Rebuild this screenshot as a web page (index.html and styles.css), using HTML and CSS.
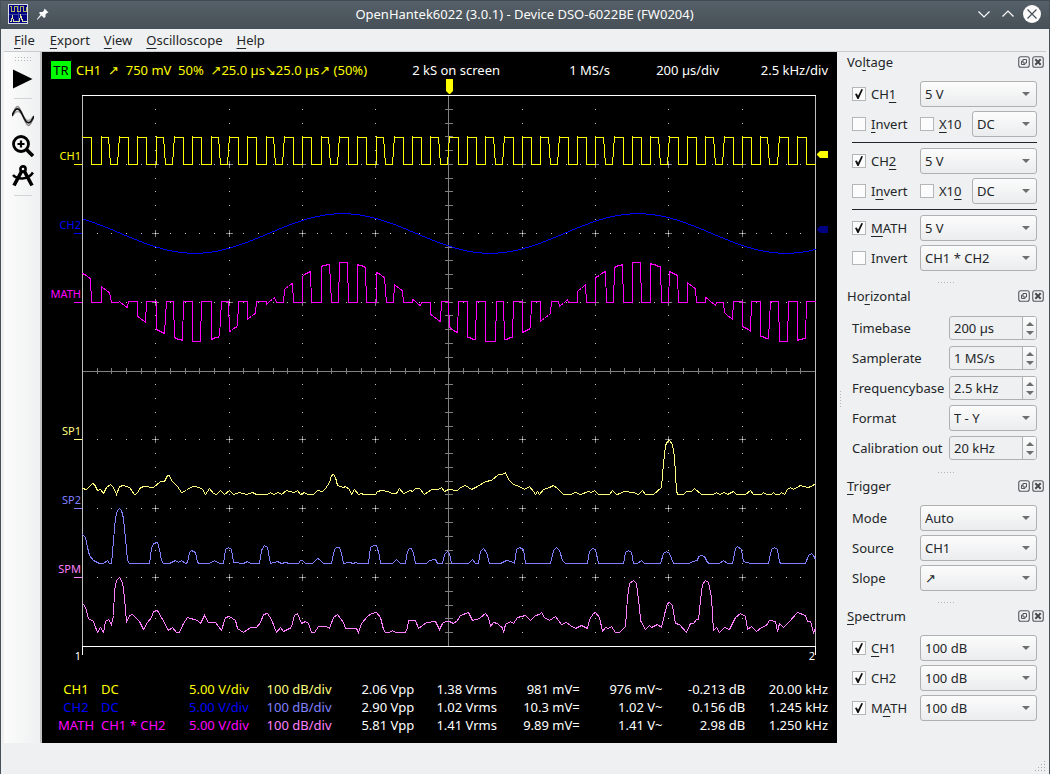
FILE: index.html
```html
<!DOCTYPE html>
<html lang="en">
<head>
<meta charset="utf-8">
<title>OpenHantek6022 (3.0.1) - Device DSO-6022BE (FW0204)</title>
<link rel="stylesheet" href="styles.css">
</head>
<body>
<div class="window">
  <header class="titlebar">
    <div class="title-side">
      <svg class="app-icon" width="20" height="20" viewBox="0 0 20 20" shape-rendering="crispEdges">
        <rect x=".5" y=".5" width="19" height="19" fill="#000080" stroke="#d8dce8"/>
        <path d="M10.500 1v18M1 10.500h18" stroke="#3040a0" fill="none"/>
        <path d="M1.500 2.500h2v5h3v-5h3v5h3v-5h3v5h3v-5" stroke="#b0b060" fill="none"/>
        <path d="M1.500 17.500h2l1-6 1 6h6l1-6 1 2 1 4h4" stroke="#e0e0a0" fill="none"/>
      </svg>
      <button class="title-btn" aria-label="Keep above">
        <svg width="14" height="14" viewBox="0 0 14 14"><path d="M8.500 1.500 12.500 5.500 11 6 9.500 7.500 9.500 10 8 11 5.500 8.500 1 13 1 12 4.500 7.500 3 6 4 5 6.500 5 8 3.500z" fill="#fcfcfc"/></svg>
      </button>
    </div>
    <h1>OpenHantek6022 (3.0.1) - Device DSO-6022BE (FW0204)</h1>
    <div class="title-side title-end">
      <button class="title-btn" aria-label="Minimize"><svg width="12" height="12" viewBox="0 0 12 12"><path d="M.5 3.500 6 9l5.500-5.500" fill="none" stroke="#fcfcfc" stroke-width="1.200"/></svg></button>
      <button class="title-btn" aria-label="Maximize"><svg width="12" height="12" viewBox="0 0 12 12"><path d="M.5 8.500 6 3l5.500 5.500" fill="none" stroke="#fcfcfc" stroke-width="1.200"/></svg></button>
      <button class="title-btn" aria-label="Close"><svg width="18" height="18" viewBox="0 0 18 18"><circle cx="9" cy="9" r="9" fill="#fcfcfc"/><path d="M4.500 4.500l9 9M13.500 4.500l-9 9" stroke="#475057" stroke-width="1.200"/></svg></button>
    </div>
  </header>

  <nav class="menubar">
    <button><u>F</u>ile</button>
    <button><u>E</u>xport</button>
    <button><u>V</u>iew</button>
    <button><u>O</u>scilloscope</button>
    <button><u>H</u>elp</button>
  </nav>

  <main class="workspace">
    <aside class="toolbar">
      <span class="tool-grip"></span>
      <button class="tool tool-play" aria-label="Start"><svg width="22" height="22" viewBox="0 0 22 22"><path d="M1 1.500 20.500 11 1 20.500z" fill="#000"/></svg></button>
      <span class="tool-sep"></span>
      <button class="tool" aria-label="Digital phosphor"><svg width="22" height="22" viewBox="0 0 22 22" fill="none">
        <path d="M0 11C5-3 7 0 11 11S17 25 22 11" stroke="#888" stroke-width="1.500"/>
        <path d="M0 11C5 5 7 5 11 11S17 17 22 11" stroke="#aaa" stroke-width="1.500"/>
        <path d="M0 11C4 1 7 2 11 11S18 20 22 11" stroke="#111" stroke-width="1.800"/></svg></button>
      <button class="tool" aria-label="Zoom"><svg width="22" height="22" viewBox="0 0 22 22" fill="none" stroke="#000"><circle cx="9" cy="9" r="7.500" stroke-width="2.800"/><path d="M9 5.500v7M5.500 9h7" stroke-width="2.200"/><path d="M14.500 14.500 21 21" stroke-width="3.600"/></svg></button>
      <button class="tool" aria-label="Measure"><svg width="22" height="22" viewBox="0 0 22 22" fill="none" stroke="#000"><circle cx="11" cy="4" r="2.600" stroke-width="2.600"/><path d="M9.500 6.500 2 20.500M12.500 6.500 20 20.500" stroke-width="3.600"/><path d="M1 10C5 14.500 16 15.500 21 7.500" stroke-width="2.600"/></svg></button>
      <span class="tool-sep"></span>
    </aside>

    <section class="scope">
      <div class="scope-head">
        <div class="trigger-info"><span class="tr-badge">TR</span><span class="trigger-text">CH1  ↗  750 mV  50%  ↗25.0 µs↘25.0 µs↗ (50%)</span></div>
        <span>2 kS on screen</span>
        <span>1 MS/s</span>
        <span>200 µs/div</span>
        <span>2.5 kHz/div</span>
      </div>
      <svg class="plot" id="plot" viewBox="42 79 795 584" role="img" aria-label="Oscilloscope traces"></svg>
      <table class="measures">
        <tbody>
          <tr class="m-ch1"><th>CH1</th><td class="left">DC</td><td>5.00 V/div</td><td class="spec">100 dB/div</td><td>2.06 Vpp</td><td>1.38 Vrms</td><td>981 mV=</td><td>976 mV~</td><td>-0.213 dB</td><td>20.00 kHz</td></tr>
          <tr class="m-ch2"><th>CH2</th><td class="left">DC</td><td>5.00 V/div</td><td class="spec">100 dB/div</td><td>2.90 Vpp</td><td>1.02 Vrms</td><td>10.3 mV=</td><td>1.02 V~</td><td>0.156 dB</td><td>1.245 kHz</td></tr>
          <tr class="m-math"><th>MATH</th><td class="left">CH1 * CH2</td><td>5.00 V/div</td><td class="spec">100 dB/div</td><td>5.81 Vpp</td><td>1.41 Vrms</td><td>9.89 mV=</td><td>1.41 V~</td><td>2.98 dB</td><td>1.250 kHz</td></tr>
        </tbody>
      </table>
    </section>

    <aside class="docks">
      <span class="dock-splitter"></span>
      <svg class="symbols" width="0" height="0">
        <symbol id="float" viewBox="0 0 12 12"><rect x=".75" y=".75" width="10.500" height="10.500" rx="2" fill="none" stroke="#55595c" stroke-width="1.100"/><path d="M5 3.500h3.500V7H5zM5 5H3.500v3.500H7V7" fill="none" stroke="#55595c"/></symbol>
        <symbol id="close" viewBox="0 0 12 12"><rect x=".75" y=".75" width="10.500" height="10.500" rx="2" fill="none" stroke="#55595c" stroke-width="1.100"/><path d="M3.300 3.300l5.400 5.400M8.700 3.300 3.300 8.700" stroke="#45494c" stroke-width="2"/></symbol>
      </svg>

      <section class="dock">
        <header><h2>Vo<u>l</u>tage</h2><button aria-label="Float"><svg width="12" height="12"><use href="#float"/></svg></button><button aria-label="Close"><svg width="12" height="12"><use href="#close"/></svg></button></header>
        <div class="rows">
          <div class="row"><label class="check"><input type="checkbox" checked><span>CH<u>1</u></span></label><span class="combo"><select aria-label="CH1 gain"><option>5 V</option></select></span></div>
          <div class="row"><label class="check"><input type="checkbox"><span><u>I</u>nvert</span></label><label class="check x10"><input type="checkbox"><span><u>X</u>10</span></label><span class="combo"><select aria-label="CH1 coupling"><option>DC</option></select></span></div>
          <hr>
          <div class="row"><label class="check"><input type="checkbox" checked><span>CH<u>2</u></span></label><span class="combo"><select aria-label="CH2 gain"><option>5 V</option></select></span></div>
          <div class="row"><label class="check"><input type="checkbox"><span>I<u>n</u>vert</span></label><label class="check x10"><input type="checkbox"><span>X1<u>0</u></span></label><span class="combo"><select aria-label="CH2 coupling"><option>DC</option></select></span></div>
          <hr>
          <div class="row"><label class="check"><input type="checkbox" checked><span><u>M</u>ATH</span></label><span class="combo"><select aria-label="MATH gain"><option>5 V</option></select></span></div>
          <div class="row"><label class="check"><input type="checkbox"><span>Invert</span></label><span class="combo"><select aria-label="MATH mode"><option>CH1 * CH2</option></select></span></div>
        </div>
      </section>
      <span class="dock-grip"></span>

      <section class="dock wide-labels">
        <header><h2>Ho<u>r</u>izontal</h2><button aria-label="Float"><svg width="12" height="12"><use href="#float"/></svg></button><button aria-label="Close"><svg width="12" height="12"><use href="#close"/></svg></button></header>
        <div class="rows">
          <div class="row"><label for="timebase">Timebase</label><span class="spin"><input id="timebase" type="text" value="200 µs"><span class="steps"><button aria-label="Up"></button><button aria-label="Down"></button></span></span></div>
          <div class="row"><label for="samplerate">Samplerate</label><span class="spin"><input id="samplerate" type="text" value="1 MS/s"><span class="steps"><button aria-label="Up"></button><button aria-label="Down"></button></span></span></div>
          <div class="row"><label for="freqbase">Frequencybase</label><span class="spin"><input id="freqbase" type="text" value="2.5 kHz"><span class="steps"><button aria-label="Up"></button><button aria-label="Down"></button></span></span></div>
          <div class="row"><label for="format">Format</label><span class="combo"><select id="format"><option>T - Y</option></select></span></div>
          <div class="row"><label for="calout">Calibration out</label><span class="spin"><input id="calout" type="text" value="20 kHz"><span class="steps"><button aria-label="Up"></button><button aria-label="Down"></button></span></span></div>
        </div>
      </section>
      <span class="dock-grip"></span>

      <section class="dock">
        <header><h2><u>T</u>rigger</h2><button aria-label="Float"><svg width="12" height="12"><use href="#float"/></svg></button><button aria-label="Close"><svg width="12" height="12"><use href="#close"/></svg></button></header>
        <div class="rows">
          <div class="row"><label for="mode">Mode</label><span class="combo"><select id="mode"><option>Auto</option></select></span></div>
          <div class="row"><label for="source">Source</label><span class="combo"><select id="source"><option>CH1</option></select></span></div>
          <div class="row"><label for="slope">Slope</label><span class="combo"><select id="slope"><option>↗</option></select></span></div>
        </div>
      </section>
      <span class="dock-grip"></span>

      <section class="dock">
        <header><h2><u>S</u>pectrum</h2><button aria-label="Float"><svg width="12" height="12"><use href="#float"/></svg></button><button aria-label="Close"><svg width="12" height="12"><use href="#close"/></svg></button></header>
        <div class="rows">
          <div class="row"><label class="check"><input type="checkbox" checked><span><u>C</u>H1</span></label><span class="combo"><select aria-label="CH1 magnitude"><option>100 dB</option></select></span></div>
          <div class="row"><label class="check"><input type="checkbox" checked><span>CH2</span></label><span class="combo"><select aria-label="CH2 magnitude"><option>100 dB</option></select></span></div>
          <div class="row"><label class="check"><input type="checkbox" checked><span>M<u>A</u>TH</span></label><span class="combo"><select aria-label="MATH magnitude"><option>100 dB</option></select></span></div>
        </div>
      </section>
    </aside>
  </main>

  <footer class="statusbar">
    <svg width="12" height="12" viewBox="0 0 12 12" shape-rendering="crispEdges"><path d="M10 1h1M7 4h1M10 4h1M4 7h1M7 7h1M10 7h1M1 10h1M4 10h1M7 10h1M10 10h1" stroke="#a8aaac" stroke-width="1" transform="translate(0 .5)"/></svg>
  </footer>
</div>
<script src="scope.js"></script>
</body>
</html>
```

FILE: styles.css
```css
* {
  box-sizing: border-box;
}

body {
  margin: 0;
  background: #eff0f1;
  color: #232629;
  font: 13px/18px "Noto Sans", "DejaVu Sans", sans-serif;
}

button,
input,
select {
  font: inherit;
  color: inherit;
}

button {
  padding: 0;
  border: 0;
  background: none;
}

button svg {
  display: block;
}

h1,
h2 {
  margin: 0;
  font-size: inherit;
  font-weight: 400;
}

u {
  text-decoration: underline 1px;
  text-underline-offset: 3px;
  text-decoration-skip-ink: none;
}

.window {
  display: flex;
  flex-direction: column;
  min-height: 100vh;
  border: solid #475057;
  border-width: 0 1px;
}

/* Title bar */
.titlebar {
  display: grid;
  grid-template-columns: 1fr auto 1fr;
  align-items: center;
  height: 29px;
  padding: 0 8px 1px 7px;
  background: linear-gradient(#434b52 0 1px, #566068 1px, #475057);
  color: #fcfcfc;
}

.title-side {
  display: flex;
  align-items: center;
  gap: 8px;
}

.title-end {
  justify-content: flex-end;
  gap: 12px;
}

.title-end .title-btn:last-child {
  margin-left: -3px;
}

/* Menu bar */
.menubar {
  display: flex;
  height: 23px;
  margin: 0 3px;
  padding: 0 2px;
  border-bottom: 1px solid #c9cbcd;
}

.menubar button {
  padding: 0 7px;
}

.menubar button:first-child {
  padding: 0 8px;
}

.workspace {
  display: flex;
  flex: 1;
}

/* Tool bar */
.toolbar {
  display: flex;
  flex-direction: column;
  align-items: center;
  width: 38px;
  margin-left: 3px;
  padding: 5px 0 0 2px;
  background: linear-gradient(90deg, #fcfcfc, #eff0f1);
  border-right: 2px solid #c0c2c4;
}

.tool-grip {
  width: 17px;
  height: 4px;
  background: repeating-linear-gradient(90deg, #b4b6b8 0 1px, transparent 1px 3px) 0 0 / 17px 1px no-repeat,
    repeating-linear-gradient(90deg, #b4b6b8 0 1px, transparent 1px 3px) 0 3px / 17px 1px no-repeat;
}

.tool {
  display: grid;
  place-items: center;
  width: 30px;
  height: 30px;
}

.tool-play {
  margin-top: 3px;
}

.tool-sep {
  width: 18px;
  height: 1px;
  margin: 4px 0 2px;
  background: #d2d4d6;
}

/* Oscilloscope screen */
.scope {
  flex: 1;
  min-width: 0;
  background: #000;
  color: #fff;
}

.scope-head {
  display: grid;
  grid-template-columns: 1fr 133px 110px 109px 109px;
  height: 27px;
  padding: 9px 9px 0;
  text-align: right;
  white-space: nowrap;
}

.trigger-info {
  display: flex;
  gap: 5px;
  width: 0;
  color: #ff0;
}

.tr-badge {
  width: 20px;
  flex-shrink: 0;
  background: #0f0;
  color: #000;
  text-align: center;
}

.trigger-text {
  white-space: pre;
}

.plot {
  display: block;
  width: 100%;
  height: auto;
}

.plot text {
  font-size: 11px;
  text-anchor: end;
}

.measures {
  width: calc(100% - 18px);
  margin: 17px 9px 9px;
  border-collapse: collapse;
  table-layout: fixed;
}

.measures th,
.measures td {
  padding: 0;
  font-weight: 400;
  text-align: right;
  white-space: nowrap;
}

.measures th {
  width: 50px;
  text-align: center;
}

.measures .left {
  width: 65px;
  text-align: left;
}

.m-ch1 :nth-child(-n + 3) { color: #ff0; }
.m-ch1 .spec { color: #ffff80; }
.m-ch2 :nth-child(-n + 3) { color: #00f; }
.m-ch2 .spec { color: #8080ff; }
.m-math :nth-child(-n + 3) { color: #f0f; }
.m-math .spec { color: #ff80ff; }

/* Dock panels */
.docks {
  position: relative;
  flex: 0 0 212px;
}

.symbols {
  position: absolute;
}

.dock-splitter {
  position: absolute;
  top: 339px;
  left: 3px;
  width: 1px;
  height: 16px;
  background: repeating-linear-gradient(#b4b6b8 0 1px, transparent 1px 3px);
}

.dock header {
  display: flex;
  align-items: center;
  gap: 2px;
  height: 20px;
  padding: 0 5px 0 10px;
}

.dock h2 {
  flex: 1;
}

.rows {
  display: flex;
  flex-direction: column;
  gap: 4px;
  padding: 9px 12px 0 15px;
}

.row {
  display: flex;
  align-items: center;
  height: 26px;
}

.row label {
  flex: 0 0 68px;
  white-space: nowrap;
}

.wide-labels .row label {
  flex-basis: 97px;
}

.row .x10 {
  flex-basis: 52px;
}

.rows hr {
  width: 100%;
  height: 3px;
  margin: 0;
  border: 0;
  background: linear-gradient(#232629, #232629) 0 1px / 100% 1px no-repeat;
}

.check {
  display: flex;
  align-items: center;
}

.check input {
  appearance: none;
  display: grid;
  place-items: center;
  width: 14px;
  height: 14px;
  margin: 0 5px 0 0;
  border: 1px solid #b4b6b8;
  background: #fcfcfc;
}

.check input:checked::before {
  content: "";
  width: 8px;
  height: 10px;
  background: #111;
  clip-path: polygon(0 50%, 22% 44%, 38% 68%, 80% 0, 100% 6%, 45% 100%, 30% 100%);
}

.combo {
  position: relative;
  flex: 1;
  display: flex;
}

.combo select {
  appearance: none;
  width: 100%;
  height: 26px;
  padding: 0 20px 0 4px;
  border: 1px solid #aeb0b2;
  border-radius: 3px;
  background: linear-gradient(#fcfcfc, #ebecee);
}

.combo::after {
  content: "";
  position: absolute;
  top: 11px;
  right: 7px;
  border: 4px solid transparent;
  border-top-color: #6c6e70;
  border-bottom: 0;
  pointer-events: none;
}

.spin {
  flex: 1;
  display: flex;
  min-width: 0;
  height: 24px;
  border: 1px solid #aeb0b2;
  border-radius: 3px;
}

.spin input {
  flex: 1;
  width: 0;
  min-width: 0;
  padding: 0 4px;
  border: 0;
  background: none;
}

.steps {
  display: flex;
  flex-direction: column;
  flex: 0 0 14px;
  padding: 2px 0;
  border-left: 1px solid #aeb0b2;
  border-radius: 0 2px 2px 0;
  background: linear-gradient(#fcfcfc, #ebecee);
}

.steps button {
  flex: 1;
  display: grid;
  place-items: center;
}

.steps button::before {
  content: "";
  border: 4px solid transparent;
  border-top: 0;
  border-bottom-color: #6c6e70;
}

.steps button:last-child::before {
  border: 4px solid transparent;
  border-bottom: 0;
  border-top-color: #6c6e70;
}

.dock-grip {
  display: block;
  height: 15px;
  padding-left: 6px;
  background: repeating-linear-gradient(90deg, #b4b6b8 0 1px, transparent 1px 3px) 50% 11px / 16px 1px no-repeat content-box;
  background-origin: content-box;
}

/* Status bar */
.statusbar {
  display: flex;
  align-items: flex-end;
  justify-content: flex-end;
  height: 31px;
  padding: 2px 3px;
}
```

FILE: scope.js
```js
const NS = "http://www.w3.org/2000/svg";
const plot = document.getElementById("plot");
const LEFT = 82, RIGHT = 815, TOP = 95, BOTTOM = 646;
const DIV_X = (RIGHT - LEFT) / 10, DIV_Y = (BOTTOM - TOP) / 8;
const CX = 448, CY = 371;

function add(name, attrs, text) {
  const el = document.createElementNS(NS, name);
  for (const key in attrs) el.setAttribute(key, attrs[key]);
  if (text) el.textContent = text;
  plot.appendChild(el);
}

function block(x, y, w, h, color) {
  add("rect", { x, y, width: w, height: h, fill: color, "shape-rendering": "crispEdges" });
}

function trace(points, color) {
  add("polyline", {
    points: points.map(([x, y]) => `${x + 0.5},${y + 0.5}`).join(" "),
    fill: "none", stroke: color, "shape-rendering": "crispEdges"
  });
}

// Graticule
for (let i = 1; i < 10; i++) {
  if (i === 5) continue;
  const x = Math.round(LEFT + i * DIV_X);
  for (let s = 1; s < 40; s++) {
    const y = Math.round(TOP + s * DIV_Y / 5);
    if (s % 5) block(x, y, 1, 1, "#c0c0c0");
    else if (s !== 20) {
      block(x - 3, y, 7, 1, "#808080");
      block(x, y - 3, 1, 7, "#808080");
      block(x, y, 1, 1, "#fff");
    }
  }
}
for (let j = 1; j < 8; j++) {
  if (j === 4) continue;
  const y = Math.round(TOP + j * DIV_Y);
  for (let s = 1; s < 50; s++) {
    if (s % 5) block(Math.round(LEFT + s * DIV_X / 5), y, 1, 1, "#c0c0c0");
  }
}
block(LEFT, CY, RIGHT - LEFT, 1, "#808080");
block(CX, TOP, 1, BOTTOM - TOP, "#808080");
for (let s = 1; s < 50; s++) block(Math.round(LEFT + s * DIV_X / 5), CY - 3, 1, 6, "#808080");
for (let s = 1; s < 40; s++) block(CX - 3, Math.round(TOP + s * DIV_Y / 5), 8, 1, "#808080");
block(LEFT, TOP, 1, BOTTOM - TOP, "#c0c0c0");
block(RIGHT, TOP, 1, BOTTOM - TOP, "#c0c0c0");
block(LEFT, TOP, RIGHT - LEFT + 1, 1, "#fff");
block(LEFT, BOTTOM, RIGHT - LEFT + 1, 1, "#fff");
block(LEFT, BOTTOM, 1, 9, "#fff");
block(RIGHT, BOTTOM, 1, 9, "#fff");

// CH1 square wave, CH2 sine and their product
const PERIOD = (RIGHT - LEFT) / 40;
const sine = x => Math.cos(2 * Math.PI * (x - 342) / 295.5);
const ch1 = [], ch2 = [], math = [];
for (let k = 0; k < 40; k++) {
  const rise = Math.round(LEFT + 0.3 + k * PERIOD);
  const fall = Math.round(LEFT + 0.3 + (k + 0.5) * PERIOD);
  const next = Math.round(LEFT + 0.3 + (k + 1) * PERIOD);
  const slant = k % 3 === 1 ? 2 : 0;
  ch1.push([rise, 136], [rise + 1, 137], [fall - slant, 137], [fall, 164], [next - slant, 164]);
  for (let x = rise; x <= fall; x += 2) {
    const value = sine(x);
    math.push([x, Math.round(302 - (value < 0 ? 39 : 40) * value)]);
  }
  const rest = sine(fall) < -0.15 ? 301 : 302;
  math.push([fall + (slant ? 1 : 0), rest], [next - (slant ? 1 : 0), rest]);
}
for (let x = LEFT; x <= RIGHT; x++) ch2.push([x, Math.round(233 - 19.8 * sine(x))]);

const sp1 = [[82,488],[86,489],[92,483],[94,484],[97,490],[100,489],[103,493],[106,487],[110,484],[113,487],[116,494],[119,486],[123,485],[129,487],[134,494],[137,493],[139,488],[143,486],[153,487],[160,481],[164,481],[167,475],[169,475],[171,480],[177,486],[181,492],[186,490],[188,488],[193,486],[199,487],[202,489],[205,494],[209,488],[213,493],[216,494],[220,490],[224,494],[229,490],[233,494],[239,492],[246,494],[252,492],[256,494],[267,494],[270,492],[273,494],[278,492],[281,494],[286,490],[289,491],[294,492],[297,490],[300,494],[304,492],[307,494],[313,494],[317,490],[322,491],[325,488],[329,482],[331,475],[333,474],[335,477],[337,485],[343,487],[345,486],[349,489],[351,494],[354,489],[358,494],[361,493],[363,494],[375,494],[377,491],[381,490],[387,491],[392,493],[396,493],[399,488],[403,493],[410,490],[412,491],[415,488],[419,488],[424,494],[431,489],[438,489],[441,487],[444,491],[448,489],[457,490],[460,487],[465,485],[471,489],[477,486],[485,481],[491,480],[498,474],[502,474],[505,472],[508,479],[513,484],[519,486],[524,489],[529,486],[533,491],[535,494],[537,491],[539,494],[543,489],[549,487],[553,485],[557,488],[563,494],[570,494],[575,492],[580,494],[588,491],[591,492],[594,490],[598,494],[609,494],[612,490],[616,494],[620,493],[623,491],[633,492],[638,494],[642,490],[645,494],[653,494],[661,487],[663,463],[665,445],[667,441],[669,440],[672,444],[674,457],[676,490],[677,494],[683,494],[686,491],[691,491],[694,488],[701,494],[713,494],[716,492],[719,494],[724,492],[727,494],[733,491],[736,494],[745,494],[750,490],[753,494],[761,494],[763,492],[766,494],[771,494],[773,492],[775,494],[779,494],[781,492],[784,494],[787,489],[790,487],[793,489],[800,485],[807,487],[811,486],[815,483]];

const sp2 = [[82,534],[85,537],[87,547],[89,555],[93,560],[99,563],[103,563],[107,560],[109,563],[111,563],[113,540],[115,517],[117,510],[119,508],[121,510],[123,518],[125,538],[127,560],[129,563],[149,563],[151,548],[153,543],[157,542],[159,549],[161,560],[163,563],[169,563],[175,560],[178,562],[181,560],[185,563],[187,562],[189,552],[191,550],[195,552],[197,562],[199,563],[209,563],[214,560],[219,563],[223,563],[225,549],[228,547],[231,549],[233,562],[243,563],[247,561],[250,563],[259,563],[261,550],[264,545],[267,547],[270,563],[277,561],[281,563],[285,562],[289,563],[298,563],[300,560],[302,560],[305,563],[312,563],[317,558],[319,559],[323,563],[331,563],[334,549],[336,547],[339,547],[341,553],[343,563],[349,562],[353,563],[355,562],[358,563],[368,563],[370,547],[373,545],[376,545],[379,555],[380,563],[392,563],[396,559],[400,563],[405,563],[407,551],[409,548],[411,548],[413,553],[415,563],[426,563],[429,560],[435,559],[437,563],[442,563],[444,554],[447,551],[449,553],[451,563],[468,563],[472,559],[475,563],[478,563],[480,551],[483,548],[486,552],[489,563],[500,563],[506,560],[511,561],[514,563],[516,549],[519,547],[523,549],[525,563],[550,563],[553,550],[556,547],[559,550],[562,560],[565,563],[587,563],[589,551],[592,548],[595,549],[598,563],[623,563],[625,552],[628,550],[631,552],[633,563],[637,563],[641,560],[644,563],[660,563],[663,553],[666,551],[669,553],[673,563],[689,563],[692,561],[697,560],[698,556],[701,555],[704,556],[707,562],[709,563],[719,563],[723,560],[727,563],[732,563],[735,548],[737,546],[741,549],[743,561],[750,563],[768,563],[771,549],[774,547],[777,549],[779,562],[781,563],[805,563],[808,555],[811,553],[813,555],[815,559]];

const spm = [[83,604],[85,607],[88,618],[93,621],[97,632],[100,627],[103,632],[105,621],[108,619],[111,624],[113,615],[114,590],[116,580],[119,577],[122,582],[124,597],[126,622],[129,615],[132,614],[139,621],[143,629],[147,622],[151,617],[153,611],[157,610],[161,617],[168,630],[172,627],[176,632],[179,632],[183,623],[187,617],[197,620],[200,623],[204,615],[208,622],[215,622],[221,630],[225,617],[229,616],[235,620],[237,628],[243,632],[250,627],[256,627],[260,622],[263,614],[267,613],[271,619],[276,632],[280,627],[283,631],[291,627],[294,615],[297,613],[301,623],[305,621],[308,623],[311,632],[314,632],[318,626],[326,626],[329,628],[333,617],[337,614],[343,622],[345,628],[356,628],[358,632],[361,623],[367,616],[371,613],[376,612],[380,617],[383,629],[385,632],[389,632],[392,630],[395,632],[405,632],[407,627],[408,620],[415,620],[418,628],[426,622],[435,621],[439,629],[442,623],[445,621],[449,621],[453,623],[457,620],[460,615],[468,612],[472,620],[479,618],[485,613],[488,617],[490,626],[493,622],[497,623],[500,626],[502,627],[503,632],[505,624],[510,621],[513,623],[517,617],[525,615],[530,620],[535,615],[539,614],[541,612],[544,617],[549,620],[555,616],[561,624],[566,622],[570,625],[575,628],[581,625],[587,628],[589,619],[593,613],[595,612],[599,617],[602,631],[605,627],[608,628],[611,626],[615,632],[619,632],[625,626],[627,597],[629,583],[633,580],[636,583],[639,607],[640,620],[645,629],[649,625],[651,627],[657,624],[661,627],[665,610],[667,603],[669,602],[672,605],[675,623],[679,624],[686,632],[690,623],[693,623],[696,619],[698,619],[700,600],[702,584],[705,580],[708,582],[711,597],[713,630],[716,627],[719,632],[724,627],[729,629],[735,617],[740,613],[745,616],[747,629],[751,626],[756,631],[761,627],[766,625],[769,620],[775,621],[777,631],[779,623],[783,627],[789,621],[797,612],[805,615],[807,621],[810,621],[813,632],[815,628]];

const channels = [
  ["CH1", 164, "#ff0", ch1],
  ["CH2", 233, "#00f", ch2],
  ["MATH", 302, "#f0f", math],
  ["SP1", 439, "#ffff80", sp1],
  ["SP2", 508, "#8080ff", sp2],
  ["SPM", 577, "#ff80ff", spm]
];
for (const [name, y, color, points] of channels) {
  trace(points, color);
  block(74, y, 8, 1, color);
  add("text", { x: 81, y: y - 4, fill: color }, name);
}
add("text", { x: 81, y: 660, fill: "#fff" }, "1");
add("text", { x: 815, y: 660, fill: "#fff" }, "2");

// Trigger position and level handles
add("polygon", { points: "446,79 453,79 453,91 450,94 449,94 446,91", fill: "#ff0" });
add("polygon", { points: "828,151 828,158 820,158 817,155 817,154 820,151", fill: "#ff0" });
add("polygon", { points: "828,226 828,233 820,233 817,230 817,229 820,226", fill: "#000080" });
```
